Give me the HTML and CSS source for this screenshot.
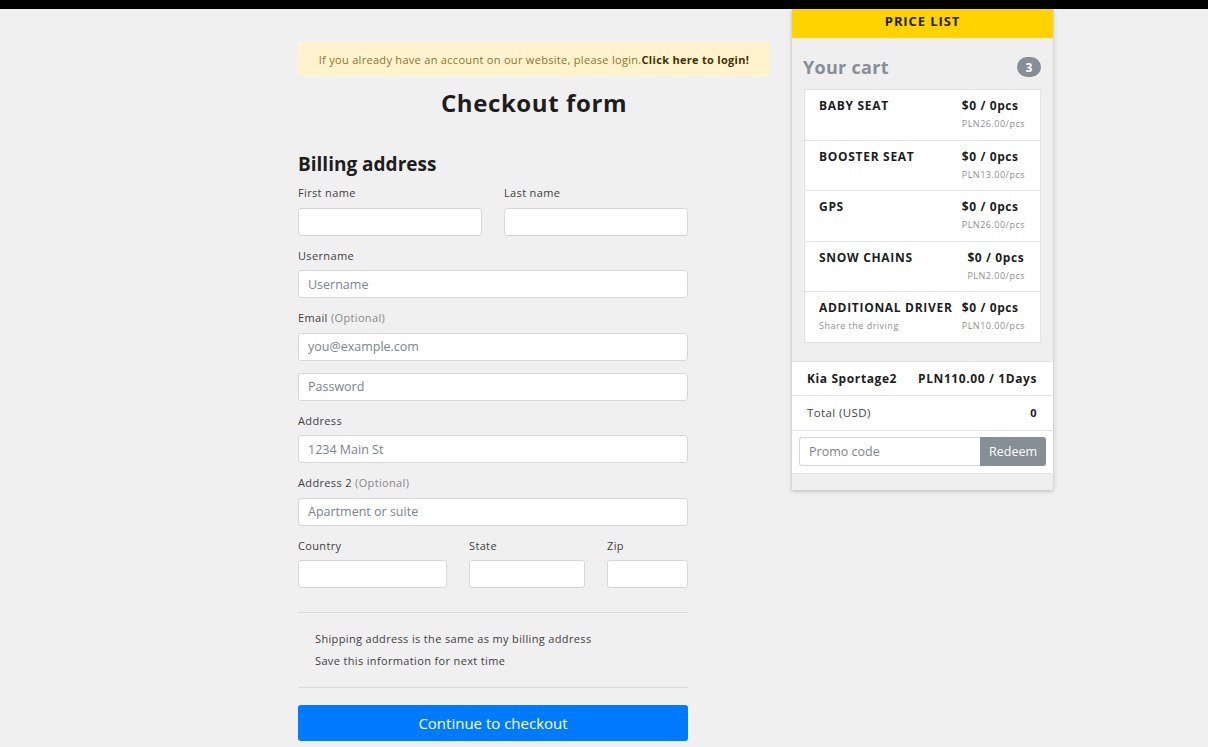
FILE: index.html
```html
<!DOCTYPE html>
<html>
<head>
<meta charset="utf-8">
<link rel="stylesheet" href="styles.css">
</head>
<body>
<div class="topbar"></div>
<div class="page">
  <main class="main">
    <div class="alert">If you already have an account on our website, please login.<b>Click here to login!</b></div>
    <h1 class="title">Checkout form</h1>
    <form class="form">
      <h2 class="section">Billing address</h2>
      <div class="row two">
        <div class="field"><label>First name</label><input class="input" type="text"></div>
        <div class="field"><label>Last name</label><input class="input" type="text"></div>
      </div>
      <div class="field"><label>Username</label><input class="input" type="text" placeholder="Username"></div>
      <div class="field"><label>Email <span class="muted">(Optional)</span></label><input class="input" type="text" placeholder="you@example.com"></div>
      <div class="field"><input class="input" type="password" placeholder="Password"></div>
      <div class="field"><label>Address</label><input class="input" type="text" placeholder="1234 Main St"></div>
      <div class="field"><label>Address 2 <span class="muted">(Optional)</span></label><input class="input" type="text" placeholder="Apartment or suite"></div>
      <div class="row three">
        <div class="field"><label>Country</label><input class="input" type="text"></div>
        <div class="field"><label>State</label><input class="input" type="text"></div>
        <div class="field"><label>Zip</label><input class="input" type="text"></div>
      </div>
      <hr class="rule">
      <div class="checks">
        <div class="check">Shipping address is the same as my billing address</div>
        <div class="check">Save this information for next time</div>
      </div>
      <hr class="rule second">
      <button type="button" class="btn">Continue to checkout</button>
    </form>
  </main>
  <aside class="panel">
    <div class="panel-head">PRICE LIST</div>
    <div class="cart-head"><span class="cart-title">Your cart</span><span class="badge">3</span></div>
    <ul class="items">
      <li class="item"><div><div class="name">BABY SEAT</div></div><div class="price"><div class="amt">$0 / 0pcs</div><div class="unit">PLN26.00/pcs</div></div></li>
      <li class="item"><div><div class="name">BOOSTER SEAT</div></div><div class="price"><div class="amt">$0 / 0pcs</div><div class="unit">PLN13.00/pcs</div></div></li>
      <li class="item"><div><div class="name">GPS</div></div><div class="price"><div class="amt">$0 / 0pcs</div><div class="unit">PLN26.00/pcs</div></div></li>
      <li class="item"><div><div class="name">SNOW CHAINS</div></div><div class="price"><div class="amt">$0 / 0pcs</div><div class="unit">PLN2.00/pcs</div></div></li>
      <li class="item"><div><div class="name">ADDITIONAL DRIVER</div><div class="sub">Share the driving</div></div><div class="price"><div class="amt">$0 / 0pcs</div><div class="unit">PLN10.00/pcs</div></div></li>
    </ul>
    <div class="sumrow car"><span>Kia Sportage2</span><span>PLN110.00 / 1Days</span></div>
    <div class="sumrow total"><span>Total (USD)</span><b>0</b></div>
    <div class="promo"><input class="promo-input" type="text" placeholder="Promo code"><button type="button" class="redeem">Redeem</button></div>
  </aside>
</div>
</body>
</html>
```
FILE: styles.css
```css
* { box-sizing: border-box; }
html, body { margin: 0; padding: 0; }
body {
  background: #f0f0f0;
  font-family: "Open Sans", "Noto Sans", sans-serif;
  color: #212529;
  width: 1208px;
  height: 747px;
  overflow: hidden;
}
.topbar { height: 9px; background: #000; }
.page {
  display: flex;
  align-items: flex-start;
  padding-left: 298px;
  gap: 22px;
}
.main { width: 472px; padding-top: 33px; }
.alert {
  background: #fff3cd;
  color: #8a7331;
  font-size: 11px;
  letter-spacing: 0.3px;
  height: 34px;
  display: flex;
  align-items: center;
  justify-content: center;
  border-radius: 3px;
}
.alert b { color: #3d2f05; font-weight: 700; }
.title {
  margin: 12px 0 0;
  text-align: center;
  font-size: 24px;
  line-height: 30px;
  font-weight: 700;
  letter-spacing: 0.6px;
  color: #1d1d1d;
}
.form { width: 390px; padding-top: 33px; }
.section {
  margin: 0 0 8px;
  font-size: 19px;
  line-height: 26px;
  font-weight: 700;
  letter-spacing: 0;
  color: #1d1d1d;
}
.row { display: grid; }
.row.two { grid-template-columns: 184px 184px; column-gap: 22px; }
.row.three { grid-template-columns: 149px 116px 81px; column-gap: 22px; }
.field { display: flex; flex-direction: column; margin-bottom: 12px; }
.field label {
  font-size: 11px;
  line-height: 16px;
  letter-spacing: 0.35px;
  color: #3f3f3f;
  margin-bottom: 6.5px;
}
.muted { color: #888; }
.input {
  height: 28px;
  border: 1px solid #d8d8d8;
  border-radius: 3px;
  background: #fff;
  padding: 0 9px;
  font-family: "Open Sans", sans-serif;
  font-size: 12.5px;
  color: #495057;
  width: 100%;
}
.input::placeholder { color: #7d848a; }
.rule {
  border: 0;
  border-top: 1px solid #dcdcdc;
  margin: 12px 0 15px;
}
.rule.second { margin: 15px 0 17px; }
.checks { padding-left: 17px; }
.check {
  font-size: 11px;
  line-height: 22px;
  letter-spacing: 0.35px;
  color: #3f3f3f;
}
.btn {
  width: 390px;
  height: 36px;
  background: #007bff;
  border: 0;
  border-radius: 3px;
  color: #fff;
  font-family: "Open Sans", sans-serif;
  font-size: 15px;
  letter-spacing: 0;
}
.panel {
  width: 261px;
  background: #efefef;
  box-shadow: 0 1px 4px rgba(0,0,0,0.25);
  padding-bottom: 16px;
}
.panel-head {
  background: #ffd200;
  height: 29px;
  display: flex;
  justify-content: center;
  padding-top: 3px;
  font-size: 13px;
  font-weight: 700;
  letter-spacing: 0.9px;
  color: #1d1d1d;
}
.cart-head {
  display: flex;
  justify-content: space-between;
  align-items: center;
  padding: 17px 12px 0 11px;
  height: 41px;
  margin-bottom: 10px;
}
.cart-title {
  font-size: 18px;
  font-weight: 700;
  color: #868e96;
  letter-spacing: 0.3px;
}
.badge {
  background: #868e96;
  color: #fff;
  font-size: 12px;
  font-weight: 700;
  width: 24px;
  height: 20px;
  border-radius: 10px;
  display: flex;
  align-items: center;
  justify-content: center;
}
.items {
  list-style: none;
  margin: 0 12px;
  padding: 0;
}
.item {
  background: #fff;
  border: 1px solid #e4e4e4;
  margin-top: -1px;
  height: 51.6px;
  display: flex;
  justify-content: space-between;
  padding: 8px 15px 0 14px;
}
.item:first-child { margin-top: 0; }
.name {
  font-size: 12px;
  font-weight: 700;
  letter-spacing: 0.7px;
  color: #1d1d1d;
  line-height: 16px;
}
.sub, .unit {
  font-size: 9px;
  letter-spacing: 0.5px;
  color: #8f8f8f;
  line-height: 16px;
  margin-top: 2px;
}
.price { text-align: left; }
.amt {
  font-size: 12px;
  font-weight: 700;
  letter-spacing: 0.6px;
  color: #1d1d1d;
  line-height: 16px;
}
.sumrow {
  display: flex;
  justify-content: space-between;
  align-items: center;
  background: #fff;
  border-top: 1px solid #e4e4e4;
  padding: 0 16px 0 15px;
}
.car {
  margin-top: 18px;
  height: 34px;
  font-size: 12px;
  font-weight: 700;
  letter-spacing: 0.6px;
  color: #1d1d1d;
}
.total {
  height: 35px;
  font-size: 11.5px;
  letter-spacing: 0.4px;
  color: #444;
}
.total b { font-weight: 700; color: #1d1d1d; font-size: 11px; }
.promo {
  display: flex;
  background: #fff;
  border-top: 1px solid #e4e4e4;
  border-bottom: 1px solid #e4e4e4;
  padding: 6px 7px 7px 7px;
}
.promo-input {
  flex: 1;
  height: 29px;
  border: 1px solid #d8d8d8;
  border-right: 0;
  border-radius: 3px 0 0 3px;
  padding: 0 9px;
  font-family: "Open Sans", sans-serif;
  font-size: 12.5px;
  min-width: 0;
}
.promo-input::placeholder { color: #7d848a; }
.redeem {
  width: 66px;
  height: 29px;
  border: 0;
  border-radius: 0 3px 3px 0;
  background: #868e96;
  color: #fff;
  font-family: "Open Sans", sans-serif;
  font-size: 12.5px;
}
```
